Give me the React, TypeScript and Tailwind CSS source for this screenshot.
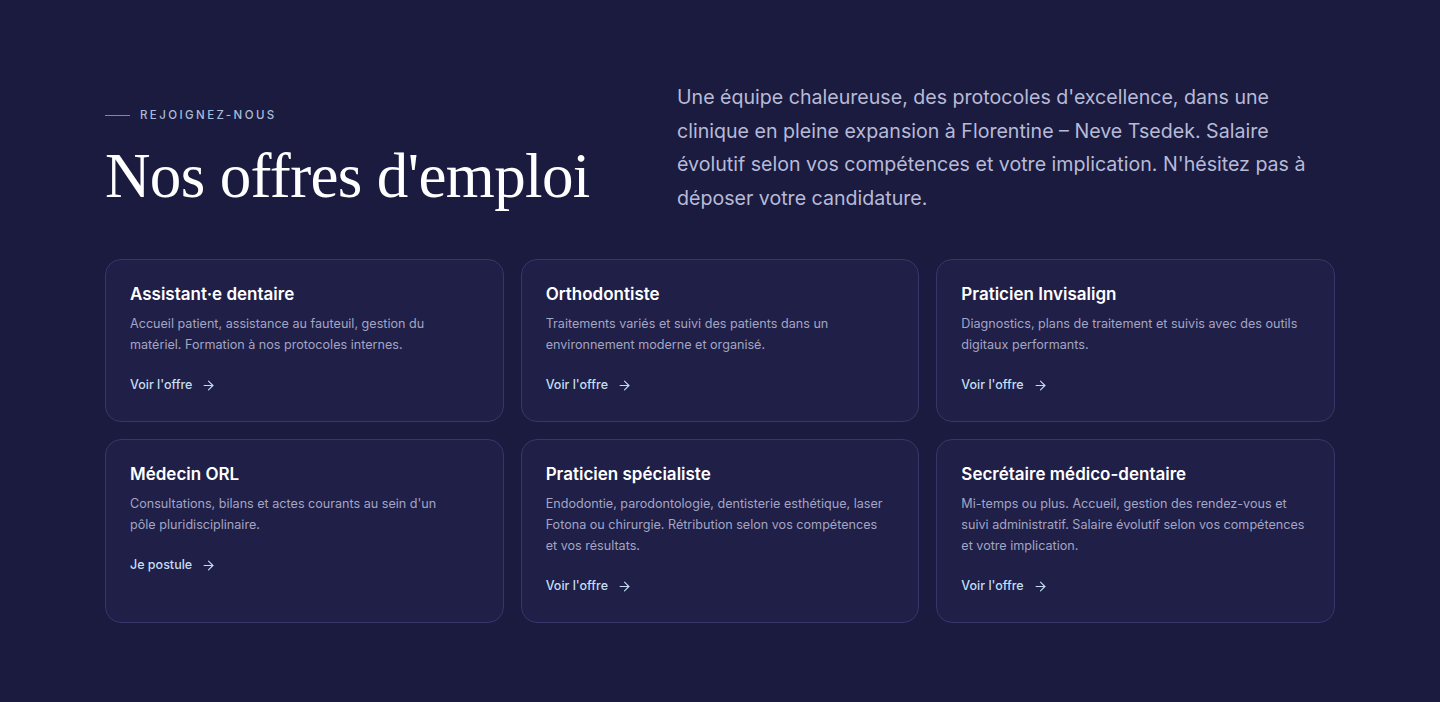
import React from 'react';
import { ArrowRight } from 'lucide-react';

type Job = { title: string; text: string; cta: string };

const JOBS: Job[] = [
  {
    title: 'Assistant·e dentaire',
    text: 'Accueil patient, assistance au fauteuil, gestion du matériel. Formation à nos protocoles internes.',
    cta: "Voir l'offre",
  },
  {
    title: 'Orthodontiste',
    text: 'Traitements variés et suivi des patients dans un environnement moderne et organisé.',
    cta: "Voir l'offre",
  },
  {
    title: 'Praticien Invisalign',
    text: 'Diagnostics, plans de traitement et suivis avec des outils digitaux performants.',
    cta: "Voir l'offre",
  },
  {
    title: 'Médecin ORL',
    text: "Consultations, bilans et actes courants au sein d'un\npôle pluridisciplinaire.",
    cta: 'Je postule',
  },
  {
    title: 'Praticien spécialiste',
    text: 'Endodontie, parodontologie, dentisterie esthétique, laser Fotona ou chirurgie. Rétribution selon vos compétences et vos résultats.',
    cta: "Voir l'offre",
  },
  {
    title: 'Secrétaire médico-dentaire',
    text: 'Mi-temps ou plus. Accueil, gestion des rendez-vous et suivi administratif. Salaire évolutif selon vos compétences et votre implication.',
    cta: "Voir l'offre",
  },
];

const JobCard: React.FC<{ job: Job }> = ({ job }) => (
  <div className="bg-[#1f1f47] border border-[#35376a] rounded-2xl px-6 pt-[22px] pb-[26px] flex flex-col">
    <h3 className="text-[17px] leading-[24px] font-semibold text-white">{job.title}</h3>
    <p className="mt-[7px] text-[12.6px] leading-[21px] text-[#a3a5c4] pr-1 whitespace-pre-line">{job.text}</p>
    <a className="mt-[21px] flex items-center gap-[9px] text-[12.5px] font-medium text-[#c3def2]">
      {job.cta}
      <ArrowRight className="w-[15px] h-[15px]" strokeWidth={1.75} />
    </a>
  </div>
);

export default function App() {
  return (
    <div
      className="min-h-[702px] bg-[#1b1b40] text-white"
      style={{ fontFamily: 'Inter, "Noto Sans", sans-serif' }}
    >
      <div className="mx-auto w-[1230px] pt-[81px] pb-20">
        {/* Header */}
        <div className="grid grid-cols-[572px_1fr] items-start">
          <div className="pt-[26px]">
            <div className="flex items-center gap-[10px]">
              <span className="block w-[25px] h-px bg-[#7d86b0]" />
              <span className="text-[11.5px] tracking-[0.21em] font-medium text-[#a9bbd9]">REJOIGNEZ-NOUS</span>
            </div>
            <h1
              className="mt-[18px] text-[63px] leading-[68px] text-white tracking-[-0.01em]"
              style={{ fontFamily: '"Liberation Serif", "DejaVu Serif", serif' }}
            >
              Nos offres d'emploi
            </h1>
          </div>
          <p className="text-[19.6px] leading-[33.6px] text-[#b7bad6] pr-2">
            Une équipe chaleureuse, des protocoles d'excellence, dans une clinique en pleine expansion à Florentine – Neve Tsedek. Salaire évolutif selon vos compétences et votre implication. N'hésitez pas à déposer votre candidature.
          </p>
        </div>

        {/* Cards */}
        <div className="mt-[44px] grid grid-cols-3 gap-x-[17px] gap-y-[17px]">
          {JOBS.map(j => (
            <JobCard key={j.title} job={j} />
          ))}
        </div>
      </div>
    </div>
  );
}
